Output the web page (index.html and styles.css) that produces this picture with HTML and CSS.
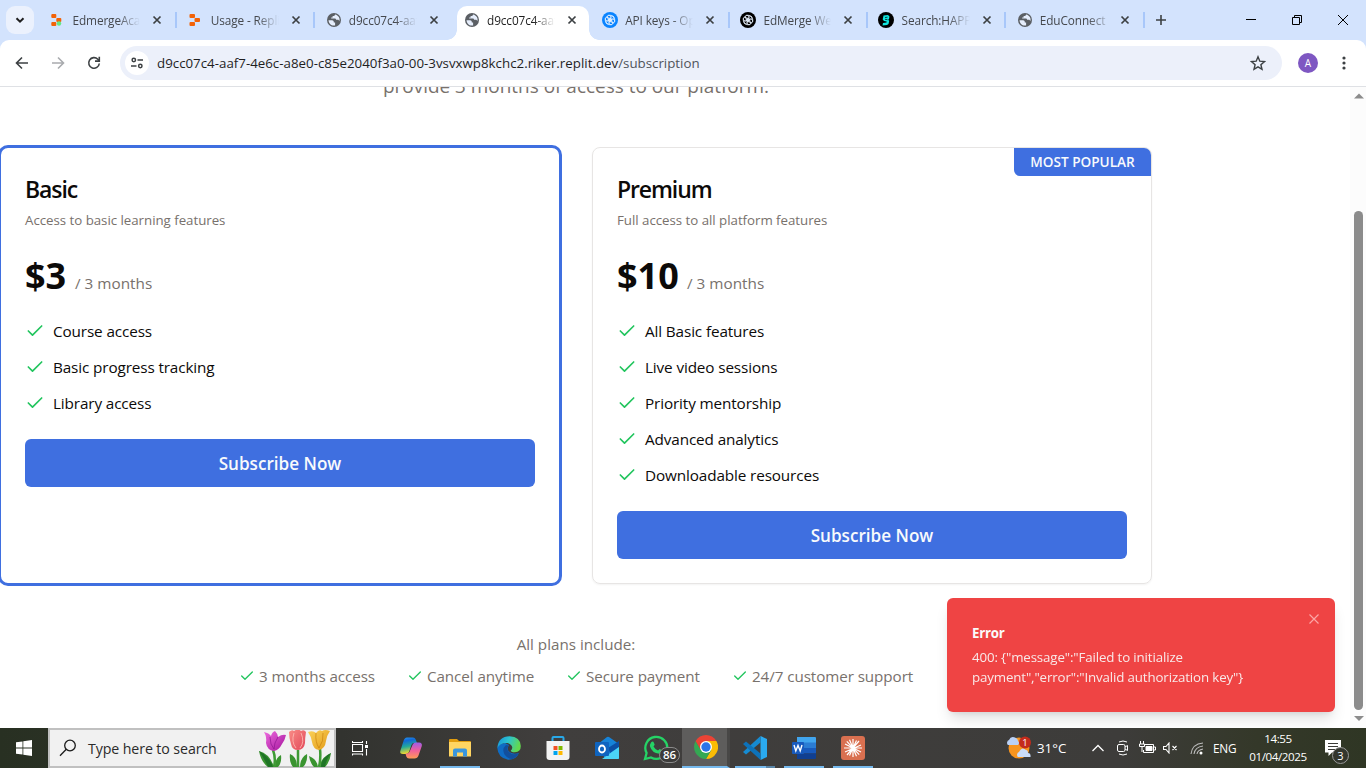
FILE: index.html
```html
<!DOCTYPE html>
<html lang="en">
<head>
<meta charset="utf-8">
<title>Subscription</title>
<link rel="stylesheet" href="styles.css">
</head>
<body>
<svg class="defs" width="0" height="0" aria-hidden="true">
  <symbol id="x" viewBox="0 0 10 10"><path d="M1.500 1.500l7 7M8.500 1.500l-7 7" fill="none" stroke="currentColor" stroke-width="1.700"/></symbol>
  <symbol id="globe" viewBox="0 0 16 16"><circle cx="8" cy="8" r="7" fill="#5b5f64"/><path d="M2.500 8.200h3.600c1 0 1.700.8 1.700 1.700v.7h1.300v2.800c-3.500.8-6.400-1.800-6.600-5.200zM9 2.400c0 .9-.6 1.500-1.500 1.500H6.600v1.500H5.200v1.200h3.600c.8 0 1.300.6 1.300 1.200h1.500c.9 0 1.600.6 1.800 1.400.9-3-.9-6.100-4.400-6.800z" fill="#e6eefc"/></symbol>
  <symbol id="knot" viewBox="0 0 16 16"><g fill="none" stroke="currentColor" stroke-width=".75"><circle cx="8" cy="8" r="1.700"/><ellipse cx="8" cy="5.500" rx="3.400" ry="2.300" transform="rotate(15 8 8)"/><ellipse cx="8" cy="5.500" rx="3.400" ry="2.300" transform="rotate(75 8 8)"/><ellipse cx="8" cy="5.500" rx="3.400" ry="2.300" transform="rotate(135 8 8)"/><ellipse cx="8" cy="5.500" rx="3.400" ry="2.300" transform="rotate(195 8 8)"/><ellipse cx="8" cy="5.500" rx="3.400" ry="2.300" transform="rotate(255 8 8)"/><ellipse cx="8" cy="5.500" rx="3.400" ry="2.300" transform="rotate(315 8 8)"/></g></symbol>
  <symbol id="check" viewBox="0 0 24 24"><path d="M20 6L9 17l-5-5" fill="none" stroke="#22c55e" stroke-width="2" stroke-linecap="round" stroke-linejoin="round"/></symbol>
</svg>

<header class="browser">
  <div class="tabstrip">
    <div class="tab-search"><svg width="10" height="10" viewBox="0 0 10 10"><path d="M1.500 3.200L5 6.700l3.500-3.500" fill="none" stroke="#1f1f1f" stroke-width="2"/></svg></div>
    <div class="tab"><svg class="fav" viewBox="0 0 16 16"><g fill="#f26207"><rect x="2.300" y="2" width="5" height="4" rx="1"/><rect x="7.300" y="6" width="5" height="4" rx="1"/><rect x="2.300" y="10" width="5" height="4" rx="1"/></g><circle cx="10" cy="11.500" r="2.200" fill="#62e884"/></svg><span class="tab-title">EdmergeAcademy</span><svg class="close"><use href="#x"/></svg></div>
    <div class="tab"><svg class="fav" viewBox="0 0 16 16"><g fill="#f26207"><rect x="2.500" y="2" width="5.500" height="4" rx="1"/><rect x="7.500" y="6" width="5.500" height="4" rx="1"/><rect x="2.500" y="10" width="5.500" height="4" rx="1"/></g></svg><span class="tab-title">Usage - Replit</span><svg class="close"><use href="#x"/></svg></div>
    <div class="tab nosep"><svg class="fav"><use href="#globe"/></svg><span class="tab-title">d9cc07c4-aaf7</span><svg class="close"><use href="#x"/></svg></div>
    <div class="tab active nosep"><svg class="fav"><use href="#globe"/></svg><span class="tab-title">d9cc07c4-aaf7</span><svg class="close"><use href="#x"/></svg></div>
    <div class="tab"><svg class="fav openai" viewBox="0 0 16 16"><circle cx="8" cy="8" r="8" fill="#0a84ff"/><use href="#knot"/></svg><span class="tab-title">API keys - OpenAI</span><svg class="close"><use href="#x"/></svg></div>
    <div class="tab"><svg class="fav openai" viewBox="0 0 16 16"><circle cx="8" cy="8" r="8" fill="#000"/><use href="#knot"/></svg><span class="tab-title">EdMerge Website</span><svg class="close"><use href="#x"/></svg></div>
    <div class="tab"><svg class="fav" viewBox="0 0 16 16"><circle cx="8" cy="8" r="8" fill="#000"/><path d="M5.500 3.500L10 3l1.500 1.500-.5 2.500-.8.800 1 1.200-.7 3-1.500 1-4.500.5.500-2.500 3.500-.5.200-1-2.700-.5-1.300-1.500z" fill="#12e6e0"/><path d="M7 5.500l2.500-.3M7 7.300l2.500.4" stroke="#000" stroke-width=".7"/></svg><span class="tab-title">Search:HAPPY</span><svg class="close"><use href="#x"/></svg></div>
    <div class="tab"><svg class="fav"><use href="#globe"/></svg><span class="tab-title wide">EduConnect</span><svg class="close"><use href="#x"/></svg></div>
    <svg class="newtab" viewBox="0 0 12 12"><path d="M6 1v10M1 6h10" stroke="#3c4043" stroke-width="1.600"/></svg>
    <div class="window-controls">
      <svg width="10" height="10"><path d="M0 4.500h10" stroke="#000"/></svg>
      <svg width="10" height="10"><path d="M.5 2.500h7v7h-7zM2.500 2.500v-2h7v7h-2" fill="none" stroke="#000"/></svg>
      <svg width="10" height="10"><path d="M0 0l10 10M10 0L0 10" stroke="#000"/></svg>
    </div>
  </div>
  <div class="toolbar">
    <svg class="nav" viewBox="0 0 16 16"><path d="M14 8H3M8 2.500L2.500 8 8 13.500" fill="none" stroke="#3c4043" stroke-width="1.600"/></svg>
    <svg class="nav" viewBox="0 0 16 16"><path d="M2 8h11M8 2.500L13.500 8 8 13.500" fill="none" stroke="#a9abae" stroke-width="1.600"/></svg>
    <svg class="nav" viewBox="0 0 16 16"><path d="M13.300 8.500A5.300 5.300 0 1 1 11.800 4.200L13.200 5.600" fill="none" stroke="#3c4043" stroke-width="1.600"/><path d="M13.300 1.800v4.300H9" fill="none" stroke="#3c4043" stroke-width="1.600"/></svg>
    <div class="omnibox">
      <span class="site"><svg width="14" height="14" viewBox="0 0 14 14" fill="none" stroke="#3c4043" stroke-width="1.500"><circle cx="3.800" cy="4" r="1.700"/><path d="M7.500 4H13M1 10h5.500"/><circle cx="10.300" cy="10" r="1.700"/></svg></span>
      <span class="url">d9cc07c4-aaf7-4e6c-a8e0-c85e2040f3a0-00-3vsvxwp8kchc2.riker.replit.dev<span class="path">/subscription</span></span>
      <svg class="star" viewBox="0 0 16 16"><path d="M8 1.800l1.800 4.400 4.700.4-3.600 3.100 1.100 4.600L8 11.800l-4 2.500 1.100-4.600L1.500 6.600l4.700-.4z" fill="none" stroke="#3c4043" stroke-width="1.400"/></svg>
    </div>
    <span class="avatar">A</span>
    <svg class="more" width="4" height="16" fill="#3c4043"><circle cx="2" cy="3" r="1.600"/><circle cx="2" cy="8" r="1.600"/><circle cx="2" cy="13" r="1.600"/></svg>
  </div>
</header>

<div class="viewport">
  <main class="page">
    <p class="intro">provide 3 months of access to our platform.</p>
    <section class="plans">
      <article class="card selected">
        <h2>Basic</h2>
        <p class="desc">Access to basic learning features</p>
        <p class="price"><strong class="p3">$3</strong><span>/ 3 months</span></p>
        <ul>
          <li><svg><use href="#check"/></svg><span>Course access</span></li>
          <li><svg><use href="#check"/></svg><span>Basic progress tracking</span></li>
          <li><svg><use href="#check"/></svg><span>Library access</span></li>
        </ul>
        <button>Subscribe Now</button>
      </article>
      <article class="card">
        <span class="badge">MOST POPULAR</span>
        <h2>Premium</h2>
        <p class="desc">Full access to all platform features</p>
        <p class="price"><strong class="p10">$10</strong><span>/ 3 months</span></p>
        <ul>
          <li><svg><use href="#check"/></svg><span>All Basic features</span></li>
          <li><svg><use href="#check"/></svg><span>Live video sessions</span></li>
          <li><svg><use href="#check"/></svg><span>Priority mentorship</span></li>
          <li><svg><use href="#check"/></svg><span>Advanced analytics</span></li>
          <li><svg><use href="#check"/></svg><span>Downloadable resources</span></li>
        </ul>
        <button>Subscribe Now</button>
      </article>
    </section>
    <section class="includes">
      <p>All plans include:</p>
      <div class="perks">
        <span><svg><use href="#check"/></svg>3 months access</span>
        <span><svg><use href="#check"/></svg>Cancel anytime</span>
        <span><svg><use href="#check"/></svg>Secure payment</span>
        <span><svg><use href="#check"/></svg>24/7 customer support</span>
      </div>
    </section>
  </main>
  <div class="scrollbar">
    <svg width="10" height="6"><path d="M0 5.500L5 .5l5 5z" fill="#8b8b8b"/></svg>
    <div class="thumb"></div>
    <svg width="10" height="6"><path d="M0 0l5 5L10 0z" fill="#8b8b8b"/></svg>
  </div>
  <div class="toast">
    <strong>Error</strong>
    <p>400: {"message":"Failed to initialize<br>payment","error":"Invalid authorization key"}</p>
    <svg class="dismiss" viewBox="0 0 10 10"><path d="M.5.5l9 9M9.500.5l-9 9" stroke="#fca5a5" stroke-width="1.200"/></svg>
  </div>
</div>

<footer class="taskbar">
  <div class="start"><svg width="16" height="16" viewBox="0 0 16 16" fill="#fff"><path d="M0 2.300l6.500-.9v6.200H0zM7.300 1.300L16 0v7.600H7.300zM0 8.400h6.500v6.200L0 13.700zM7.300 8.400H16V16l-8.700-1.300z"/></svg></div>
  <div class="search">
    <svg width="18" height="18" viewBox="0 0 18 18" fill="none" stroke="#1b1b1b" stroke-width="1.300"><circle cx="11" cy="6.500" r="5.300"/><path d="M7.300 10.300L1 16.800"/></svg>
    <span>Type here to search</span>
    <svg class="tulips" width="74" height="37" viewBox="0 0 74 37">
      <defs>
        <linearGradient id="tp" x2="1" y2="1"><stop stop-color="#ef6de0"/><stop offset="1" stop-color="#a3129b"/></linearGradient>
        <linearGradient id="tr" x2="1" y2="1"><stop stop-color="#f98c86"/><stop offset="1" stop-color="#e2485a"/></linearGradient>
        <linearGradient id="ty" x2="1" y2="1"><stop stop-color="#fbd35a"/><stop offset="1" stop-color="#e39a17"/></linearGradient>
      </defs>
      <g stroke="#3f9b35" stroke-width="2.500" fill="none"><path d="M15 20q3 8 1 17M40 20v17M62 19q1 9-1 18"/></g>
      <path d="M16 37Q12 24 1 21q2 11 9 16zM17 37q0-9 6-12 1 8-3 12zM39 37q0-10-7-13-1 8 3 13zM42 37q0-9 7-13 1 8-4 13zM60 37q-1-8-9-11 1 7 5 11zM62 37q0-9 11-14-1 9-6 14z" fill="#3a9430"/>
      <path d="M15 37Q12 27 1 21q6 9 9 16zM63 37q0-9 10-14-5 7-6 14z" fill="#1f7426"/>
      <path d="M6 2q5 1 7 4 1-4 4-5 3 3 3 6 4-3 8-2-1 5-4 9-3 6-8 7-7-1-8-8Q9 7 6 2z" fill="url(#tp)"/><path d="M12 7q0 8 4 12M20 7q-4 6-4 12" stroke="#8e1690" stroke-width=".7" fill="none"/>
      <path d="M31 2q3-3 5-1 4-3 7 0 3-2 5 1-1 6-1 11-1 7-7 7t-7-6q-2-6-2-12z" fill="url(#tr)"/><path d="M36 3q-3 9 2 15M43 3q4 9-1 15" stroke="#ffc0b8" stroke-width=".8" fill="none"/>
      <path d="M50 2q5-2 8 1 3-4 6-2 3-2 8 0-3 4-4 10-1 8-7 9-6-1-7-8-1-6-4-10z" fill="url(#ty)"/><path d="M58 3q-1 9 3 15M65 3q1 8-4 15" stroke="#c8830f" stroke-width=".7" fill="none"/>
    </svg>
  </div>
  <nav class="apps">
    <div class="app taskview"><svg width="16" height="17" viewBox="0 0 16 17" fill="none" stroke="#fff" stroke-width="1.100"><path d="M.5 4.500h10v7H.5zM.5 1v1.500h10V1M.5 15.500V14h10v1.500M14.500 1v3M14.500 9v6.500"/><path d="M13 5h3v3h-3z" fill="#fff" stroke="none"/></svg></div>
    <div class="app"><svg width="24" height="24" viewBox="0 0 24 24"><defs><linearGradient id="c1" x2=".2" y2="1"><stop stop-color="#2a9df0"/><stop offset=".25" stop-color="#1168d8"/><stop offset=".6" stop-color="#23a99a"/><stop offset="1" stop-color="#f0d82e"/></linearGradient><linearGradient id="c2" x2="0" y2="1"><stop stop-color="#9d5ce8"/><stop offset=".5" stop-color="#f0609b"/><stop offset="1" stop-color="#ff9a55"/></linearGradient></defs><path d="M8 1.500h6q2 0 2.700 2L18 7h-3q-2 0-2.600 2L10 16q-1 2-3 2H4q-3.500 0-2.700-3L4.500 5Q5.500 1.500 8 1.500z" fill="url(#c1)"/><path d="M17 6.500h3q3.500 0 2.800 3.500L19.500 19.500q-1 3-4 3H10q-2 0-2.700-2L6.500 17.500H8q2 0 2.700-2l3-7q1-2 3.300-2z" fill="url(#c2)"/></svg></div>
    <div class="app run"><svg width="24" height="24" viewBox="0 0 24 24"><path d="M1 4q0-1 1-1h7l2 2h11q1 0 1 1v13H1z" fill="#e29d0e"/><path d="M1 6h22v14.500H1z" fill="#ffd562"/><path d="M5 20.500v-6q0-2 2-2h10q2 0 2 2v6h-4v-4H9v4z" fill="#3a96dd"/></svg></div>
    <div class="app"><svg width="24" height="24" viewBox="0 0 24 24"><defs><linearGradient id="e1" x2="1" y2=".3"><stop stop-color="#1590dc"/><stop offset=".5" stop-color="#2cc3cf"/><stop offset="1" stop-color="#62d84f"/></linearGradient></defs><path d="M.3 12Q1 8 8 7l4 2q-2 3-.5 6 3.500 4 10.500 2Q19 24 11 23.700 1 22 .3 12z" fill="#0f6cc4"/><path d="M9 9q-4.500 4-1.500 9.500 3 4.500 8 4.500 4.500-2 6.500-6-7 3-10.500-1.500Q9.500 13 11.500 9.500z" fill="#124f9c"/><path d="M.3 12Q1.500.3 12.500.3q11 .7 11.300 9.700 0 6-6 6.300-4-.1-4-1.800 1.500-1 1.500-3Q14.800 8 10.500 7 3.500 6.500.3 12z" fill="url(#e1)"/></svg></div>
    <div class="app"><svg width="24" height="24" viewBox="0 0 24 24"><path d="M6.500 6V2q0-1 1-1h9q1 0 1 1v4" fill="none" stroke="#28a8e8" stroke-width="2"/><path d="M.5 5h23v16q0 3-3 3h-17q-3 0-3-3z" fill="#f3f3f3"/><path d="M7.500 10h4v4h-4z" fill="#f25022"/><path d="M12.500 10h4v4h-4z" fill="#7fba00"/><path d="M7.500 15h4v4h-4z" fill="#00a4ef"/><path d="M12.500 15h4v4h-4z" fill="#ffb900"/></svg></div>
    <div class="app"><svg width="24" height="24" viewBox="0 0 24 24"><path d="M3 8l9-7q1-.5 2 0l10 7v14q0 1-1 1H10z" fill="#1683d8"/><path d="M13 12l11-7v6l-9 6z" fill="#0b4fa5"/><path d="M7 23l17-12v11q0 1-1 1z" fill="#4bd3f5"/><rect y="6" width="14" height="14" rx="1" fill="#0f64bf"/><ellipse cx="7" cy="13" rx="3" ry="3.500" fill="none" stroke="#fff" stroke-width="1.800"/></svg></div>
    <div class="app whatsapp"><svg width="26" height="26" viewBox="0 0 26 26"><path d="M2 24l1.600-6A11 11 0 1 1 8 22.500z" fill="none" stroke="#25d366" stroke-width="2.300"/><path d="M8 7.500q2-2 3 .5l.7 1.800-1.200 1.700q1.500 2.800 4.500 4l1.700-1.500 3 1.500q0 3-3.500 3.300Q9 18 7 11.500q-.3-2 1-4z" fill="#25d366"/></svg><span class="count">86</span></div>
    <div class="app chrome"><svg width="24" height="24" viewBox="0 0 24 24"><path d="M12 6h10.400A12 12 0 0 1 12 24l5.200-9z" fill="#fbbc05"/><path d="M6.800 15L1.610 6A12 12 0 0 0 12 24l5.200-9z" fill="#34a853"/><path d="M1.610 6A12 12 0 0 1 22.390 6H12L6.800 15z" fill="#ea4335"/><circle cx="12" cy="12" r="6" fill="#fff"/><circle cx="12" cy="12" r="4.700" fill="#2b74e8"/></svg></div>
    <div class="app run stacked"><svg width="24" height="24" viewBox="0 0 24 24"><path d="M17.500 0L24 3v18l-6.500 3z" fill="#2aaaf0"/><path d="M17.500 0v6.500L3 18.500 0 16z" fill="#168bd2"/><path d="M17.500 24v-6.500L3 5.500 0 8z" fill="#0d72ba"/></svg></div>
    <div class="app run"><svg width="24" height="24" viewBox="0 0 24 24"><path d="M5 1h18q1 0 1 1v5H5z" fill="#41a5ee"/><path d="M5 6.500h19V12H5z" fill="#2b7cd3"/><path d="M5 12h19v5.500H5z" fill="#185abd"/><path d="M5 17.500h19V22q0 1-1 1H5z" fill="#103f91"/><rect y="6" width="12" height="12" rx="1" fill="#185abd"/><path d="M2 9l1.800 6L6 9.500 8.200 15 10 9" fill="none" stroke="#fff" stroke-width="1.400"/></svg></div>
    <div class="app run"><svg width="24" height="24" viewBox="0 0 24 24"><rect width="24" height="24" rx="3" fill="#d97050"/><path d="M12 3v18M3 12h18M5.800 5.300l12.400 13.400M18 5l-12 14M8.500 3.700l7 16.600M15.500 4.500l-7 15M4 8l16 8M4 16l16-7" stroke="#fff" stroke-width="1.200"/></svg></div>
  </nav>
  <div class="tray">
    <svg class="weather" width="26" height="24" viewBox="0 0 26 24"><circle cx="13" cy="12" r="10.500" fill="#f7941e"/><path d="M2 9a3 3 0 0 1 1-5q2-5 7-2 2 1 2 3 2 2 0 4z" fill="#b9d0f5"/><path d="M12 21a3 3 0 0 1 1-5q3-6 7-2 2 0 2 3 3 0 2.500 4z" fill="#cadcf8"/><circle cx="19" cy="6.500" r="6" fill="#c42b1c"/><text x="19" y="10" font-size="9.500" text-anchor="middle" fill="#fff">1</text></svg>
    <span class="temp">31°C</span>
    <svg class="t-up" width="12" height="8"><path d="M.5 7L6 1.500 11.500 7" fill="none" stroke="#fff" stroke-width="1.300"/></svg>
    <svg class="t-meet" width="12" height="16" viewBox="0 0 12 16" fill="none" stroke="#fff"><rect x=".5" y="4.500" width="7.500" height="7" rx="1.500"/><path d="M8 7l2.500-1.500v5L8 9M2 2q4-2 8 0M2 14q4 2 8 0"/></svg>
    <svg class="t-bat" width="17" height="14" viewBox="0 0 17 14" fill="none" stroke="#fff"><path d="M5 3.500h9.500v8h-10V9M14.500 6h2v3h-2M1.500 0v3M4.500 0v3M.5 3h5v2.500h-5zM3 6v5"/><path d="M7 5.500h6v4H7z" fill="#fff"/></svg>
    <svg class="t-vol" width="15" height="12" viewBox="0 0 15 12" fill="none" stroke="#fff" stroke-width="1.100"><path d="M.5 4.500H3l3-3.500v10L3 7.500H.5zM9.500 4l4 4M13.500 4l-4 4"/></svg>
    <svg class="t-net" width="14" height="13" viewBox="0 0 14 13" fill="none"><g stroke="#bcbcbc" stroke-width="1.100"><path d="M1 12Q2 2 13 1M4 12Q5 5 13 4M7 12Q7.500 8 13 7"/></g><circle cx="11" cy="11" r="1.500" fill="#fff"/></svg>
    <span class="lang">ENG</span>
    <div class="clock"><span>14:55</span><span>01/04/2025</span></div>
    <div class="notify"><svg width="16" height="16" viewBox="0 0 16 16"><path d="M0 0h16v12.500H7L3.500 16v-3.500H0z" fill="#fff"/><path d="M3 3.500h10M3 6.500h10M3 9.500h7" stroke="#3b3b38"/></svg><span class="n-count">3</span></div>
  </div>
</footer>
</body>
</html>
```
FILE: styles.css
```css
* { box-sizing: border-box; }
body { margin: 0; width: 1366px; height: 768px; overflow: hidden; display: flex; flex-direction: column; background: #fff; font-family: "Open Sans", "Noto Sans", sans-serif; color: #0c0a09; }
p, h2, ul { margin: 0; padding: 0; font-weight: 400; }
svg { flex: none; display: block; }
.defs { position: absolute; }

/* Browser chrome */
.browser { height: 87px; flex: none; background: #d3e3fd; border-bottom: 1px solid #dfe1e5; }
.tabstrip { height: 40px; display: flex; align-items: center; }
.tab-search { width: 28px; height: 28px; margin: 0 4px 0 6px; border-radius: 9px; background: #ebf1fd; display: grid; place-items: center; }
.tab { position: relative; width: 138.200px; height: 40px; flex: none; display: flex; align-items: center; padding-left: 11.200px; font-size: 11.800px; letter-spacing: -.1px; color: #45484d; }
.tab::after { content: ""; position: absolute; right: -1px; top: 12px; width: 2px; height: 16px; background: #a8c7fa; }
.tab.nosep::after { display: none; }
.fav { width: 16px; height: 16px; margin-right: 7.300px; }
.openai { color: #e8f2ff; }
.tab-title { width: 68px; overflow: hidden; white-space: nowrap; mask-image: linear-gradient(90deg, #000 68%, transparent 100%); }
.tab-title.wide { mask-image: linear-gradient(90deg, #000 70%, rgba(0, 0, 0, .2) 100%); }
.close { width: 10px; height: 10px; margin-left: 12px; color: #3c4043; }
.tab.active { z-index: 1; color: #1f1f1f; }
.tab.active > * { z-index: 1; position: relative; }
.tab.active::before { content: ""; position: absolute; left: 4.400px; top: 6px; width: 132px; height: 34px; border-radius: 10px 10px 0 0; background: #fff; }
.tab.active::after { display: block; left: -5.600px; right: auto; top: 30px; width: 152px; height: 10px; background: radial-gradient(circle at 0 0, transparent 9.500px, #fff 10px) left / 10px 10px no-repeat, radial-gradient(circle at 100% 0, transparent 9.500px, #fff 10px) right / 10px 10px no-repeat; }
.newtab { width: 12px; height: 12px; margin-left: 11px; }
.window-controls { display: flex; gap: 36px; margin-left: auto; margin-right: 18px; }
.toolbar { height: 46px; background: #fff; border-radius: 9px 9px 0 0; display: flex; align-items: center; padding-left: 14px; }
.nav { width: 16px; height: 16px; margin-right: 20px; }
.omnibox { margin-left: -2px; width: 1162px; height: 34px; border-radius: 17px; background: #ecf0fa; display: flex; align-items: center; padding: 0 16px 0 5px; }
.site { width: 24px; height: 24px; border-radius: 50%; background: #fff; display: grid; place-items: center; }
.url { margin-left: 8px; font-size: 13.320px; color: #1f1f1f; white-space: nowrap; }
.path { color: #50545a; }
.star { width: 16px; height: 16px; margin-left: auto; }
.avatar { width: 20px; height: 20px; margin-left: 16px; border-radius: 50%; background: #7e57c2; color: #fff; font-size: 10px; line-height: 20px; text-align: center; }
.more { margin-left: 24px; }

/* Page */
.viewport { position: relative; height: 641px; flex: none; display: flex; justify-content: space-between; overflow: hidden; }
.page { width: 1152px; }
.intro { height: 60px; margin-top: -15px; text-align: center; font-size: 18.950px; line-height: 28px; color: #78716c; }
.plans { display: grid; grid-template-columns: 560px 560px; gap: 32px; margin-top: 15px; }
.card { position: relative; height: 437px; border: 1px solid #e7e5e4; border-radius: 8px; padding: 25px 24px 24px; box-shadow: 0 1px 2px rgba(0, 0, 0, .05); }
.card.selected { height: 441px; margin: -2px; border: 3px solid #3f6fe0; border-radius: 10px; box-shadow: none; }
.card h2 { font-size: 23px; line-height: 32px; font-weight: 600; letter-spacing: -1.100px; }
.desc { margin-top: 5px; font-size: 13.300px; line-height: 20px; letter-spacing: -.030px; color: #78716c; }
.price { height: 40px; margin: 26px 0 23px; display: flex; align-items: baseline; font-size: 15.300px; line-height: 40px; color: #78716c; }
.price strong { font-size: 36px; line-height: 40px; color: #0c0a09; }
.p3 { width: 50px; }
.p10 { width: 70px; }
.card ul { list-style: none; display: grid; gap: 12px; margin-bottom: 24px; }
.card li { display: flex; align-items: center; gap: 8px; height: 24px; font-size: 15.300px; line-height: 24px; letter-spacing: -.130px; }
.card li svg { width: 20px; height: 20px; }
.card button { display: block; width: 100%; height: 48px; border: 0; border-radius: 6px; background: #3f6fe0; color: #f8fafc; font: 600 17.100px "Open Sans", "Noto Sans", sans-serif; }
.badge { position: absolute; right: 0; top: 0; width: 137px; height: 28px; border-radius: 0 7px 0 6px; background: #3f6fe0; color: #f8fafc; font-size: 13.600px; font-weight: 600; line-height: 27px; text-align: center; }
.includes { padding-top: 48px; font-size: 15.200px; line-height: 24px; color: #78716c; text-align: center; }
.perks { display: grid; grid-template-columns: 168px 159px 166px auto; justify-content: start; padding-left: 239px; margin-top: 8px; letter-spacing: -.070px; }
.perks span { display: flex; align-items: center; gap: 4px; white-space: nowrap; }
.perks svg { width: 16px; height: 16px; }
.scrollbar { width: 16px; background: #fcfcfc; display: flex; flex-direction: column; align-items: center; padding: 6px 0 6px 1px; }
.thumb { width: 9px; height: 499px; margin: 112px 0 auto; border-radius: 5px; background: #8b8b8b; }
.toast { position: absolute; left: 947px; top: 511px; width: 388px; height: 114px; padding: 25px; border-radius: 6px; background: #ef4444; color: #fafafa; box-shadow: 0 10px 15px -3px rgba(0, 0, 0, .12), 0 4px 6px -4px rgba(0, 0, 0, .12); font-size: 13.300px; line-height: 20px; }
.toast strong { display: block; font-weight: 700; letter-spacing: -.250px; margin-bottom: 4px; }
.toast p { opacity: .9; font-weight: 500; letter-spacing: -.130px; white-space: nowrap; }
.dismiss { position: absolute; right: 16px; top: 16px; width: 10px; height: 10px; }

/* Taskbar */
.taskbar { height: 40px; flex: none; display: flex; color: #fff; background: linear-gradient(90deg, #283022 0, #32332f 25%, #403e3d 40%, #3d3c3a 82%, #343829 92%, #2f3624 100%); }
.start { width: 48px; display: grid; place-items: center; }
.search { width: 288px; border: 2px solid #c0c0c0; background: #f1f1f1; color: #2b2b2b; display: flex; align-items: center; padding-left: 9px; font-size: 14.200px; letter-spacing: -.100px; white-space: nowrap; }
.search span { width: 170px; margin-left: 11px; }
.apps { display: flex; }
.app { position: relative; width: 49px; display: grid; place-items: center; }
.app.taskview { width: 50px; padding-right: 3px; }
.app.run::after { content: ""; position: absolute; left: 5px; right: 4px; bottom: 0; height: 2px; background: #76b9ed; }
.app.stacked::after { background: linear-gradient(90deg, #76b9ed 78%, #5a86a8 78%); }
.app.whatsapp { width: 51px; padding-right: 2px; }
.app.chrome { background: #5e5d5c; width: 48px; border-right: 3px solid #484746; border-bottom: 2px solid #76b9ed; padding-left: 3px; }
.count { position: absolute; right: 2px; bottom: 5px; width: 21px; height: 16px; border-radius: 8px; border: 1px solid #8b8b8b; background: #3c3b3a; font-size: 11.500px; line-height: 14px; text-align: center; font-weight: 600; }
.tray { margin-left: auto; display: flex; align-items: center; font-size: 12px; white-space: nowrap; }
.weather { margin-right: -1px; }
.temp { width: 55px; margin-left: 6px; font-size: 13.300px; }
.t-meet { margin-left: 13px; }
.t-bat { margin-left: 10px; }
.t-vol { margin-left: 7px; }
.t-net { margin-left: 12px; }
.lang { width: 24px; margin-left: 9px; font-size: 11.800px; letter-spacing: -.2px; }
.clock { width: 60px; margin-left: 11px; display: flex; flex-direction: column; align-items: center; font-size: 11.600px; line-height: 18px; letter-spacing: -.4px; }
.notify { position: relative; margin: 0 25px 0 17px; }
.n-count { position: absolute; left: 7px; top: 7px; width: 17px; height: 17px; border: 1px solid #999; border-radius: 50%; background: #33362d; font-size: 11px; line-height: 15px; text-align: center; }
```
